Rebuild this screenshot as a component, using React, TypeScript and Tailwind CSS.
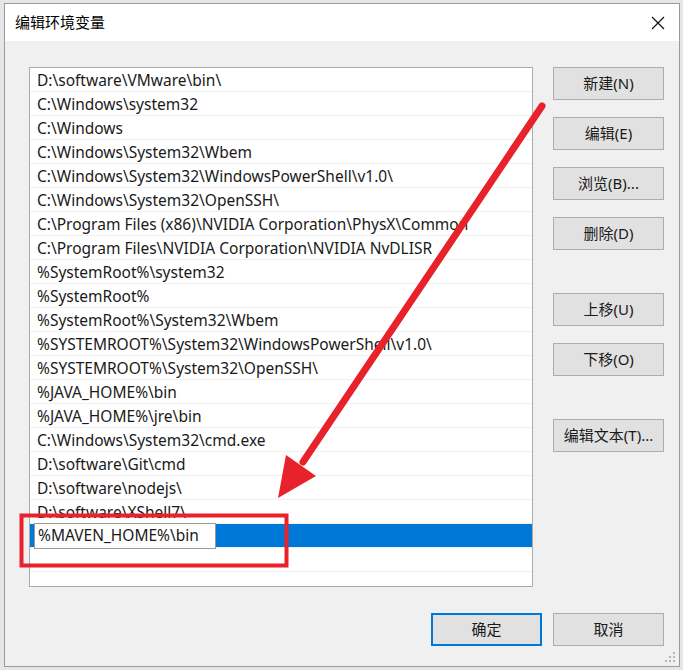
import React from "react";

const paths = [
	"D:\\software\\VMware\\bin\\",
	"C:\\Windows\\system32",
	"C:\\Windows",
	"C:\\Windows\\System32\\Wbem",
	"C:\\Windows\\System32\\WindowsPowerShell\\v1.0\\",
	"C:\\Windows\\System32\\OpenSSH\\",
	"C:\\Program Files (x86)\\NVIDIA Corporation\\PhysX\\Common",
	"C:\\Program Files\\NVIDIA Corporation\\NVIDIA NvDLISR",
	"%SystemRoot%\\system32",
	"%SystemRoot%",
	"%SystemRoot%\\System32\\Wbem",
	"%SYSTEMROOT%\\System32\\WindowsPowerShell\\v1.0\\",
	"%SYSTEMROOT%\\System32\\OpenSSH\\",
	"%JAVA_HOME%\\bin",
	"%JAVA_HOME%\\jre\\bin",
	"C:\\Windows\\System32\\cmd.exe",
	"D:\\software\\Git\\cmd",
	"D:\\software\\nodejs\\",
	"D:\\software\\XShell7\\",
];

const sideButtons = [
	{ label: "新建(N)", gap: "mb-[17px]" },
	{ label: "编辑(E)", gap: "mb-[17px]" },
	{ label: "浏览(B)...", gap: "mb-[17px]" },
	{ label: "删除(D)", gap: "mb-[43px]" },
	{ label: "上移(U)", gap: "mb-[17px]" },
	{ label: "下移(O)", gap: "mb-[43px]" },
	{ label: "编辑文本(T)...", gap: "" },
];

function WinButton({ label, primary }: { label: string; primary?: boolean }) {
	return (
		<button
			className={
				primary
					? "w-[111px] h-[33px] bg-[#e1e1e1] border-2 border-[#0078d7] text-[15px] text-[#1a1a1a]"
					: "w-[111px] h-[33px] bg-[#e1e1e1] border border-[#adadad] text-[15px] text-[#1a1a1a]"
			}
		>
			{label}
		</button>
	);
}

export default function App() {
	return (
		<div
			className="relative w-[683px] h-[670px] bg-[#e6e6e6] pt-[3px] pl-[4px] overflow-hidden"
			style={{ fontFamily: '"Noto Sans", "Noto Sans CJK SC", sans-serif' }}
		>
			<div className="w-[676px] h-[664px] border border-[#9a9a9a] bg-[#f0f0f0] flex flex-col">
				{/* title bar */}
				<div className="h-[37px] bg-white flex items-center justify-between pl-[10px] pr-[14px] shrink-0">
					<span className="text-[15px] text-black">编辑环境变量</span>
					<svg width="14" height="14" viewBox="0 0 14 14" role="img">
						<title>close</title>
						<path d="M1 1L13 13M13 1L1 13" stroke="#111" strokeWidth="1.2" />
					</svg>
				</div>

				<div className="flex pl-[24px] pt-[26px] gap-[20px]">
					{/* list box */}
					<div className="w-[504px] h-[520px] bg-white border border-[#aaaaaa] flex flex-col text-[15.5px] text-[#1a1a1a]">
						{paths.map((p) => (
							<div
								key={p}
								className="h-[24px] shrink-0 border-b border-[#f0f0f0] flex items-center pl-[7px] pt-[2px] whitespace-nowrap"
							>
								{p}
							</div>
						))}
						<div className="h-[24px] shrink-0 bg-[#0078d7] border-b border-[#f0f0f0] flex items-center pl-[4px]">
							<div className="h-[26px] w-[182px] bg-white border border-[#9a9a9a] flex items-center pl-[3px] pt-[1px] whitespace-nowrap">
								%MAVEN_HOME%\bin
							</div>
						</div>
						<div className="h-[24px] shrink-0 border-b border-[#f0f0f0]" />
					</div>

					{/* side buttons */}
					<div className="flex flex-col">
						{sideButtons.map((b) => (
							<div key={b.label} className={b.gap}>
								<WinButton label={b.label} />
							</div>
						))}
					</div>
				</div>

				<div className="flex justify-end gap-[11px] pr-[15px] mt-[26px]">
					<WinButton label="确定" primary />
					<WinButton label="取消" />
				</div>

				<div className="flex justify-end pr-[4px] mt-auto pb-[4px]">
					<svg width="10" height="10" viewBox="0 0 10 10" role="img">
						<title>grip</title>
						<g fill="#b5b5b5">
							<rect x="8" y="0" width="2" height="2" />
							<rect x="4" y="4" width="2" height="2" />
							<rect x="8" y="4" width="2" height="2" />
							<rect x="0" y="8" width="2" height="2" />
							<rect x="4" y="8" width="2" height="2" />
							<rect x="8" y="8" width="2" height="2" />
						</g>
					</svg>
				</div>
			</div>

			{/* red annotations */}
			<svg
				className="absolute left-0 top-0 pointer-events-none"
				width="683"
				height="670"
				viewBox="0 0 683 670"
				role="img"
			>
				<title>annotation</title>
				<line
					x1="542"
					y1="106"
					x2="303"
					y2="462"
					stroke="#e8222b"
					strokeWidth="7"
					strokeLinecap="round"
				/>
				<polygon points="278,498 286,455 316,476" fill="#e8222b" />
				<rect
					x="21.5"
					y="515.5"
					width="265"
					height="50"
					fill="none"
					stroke="#e8222b"
					strokeWidth="4"
				/>
			</svg>
		</div>
	);
}
